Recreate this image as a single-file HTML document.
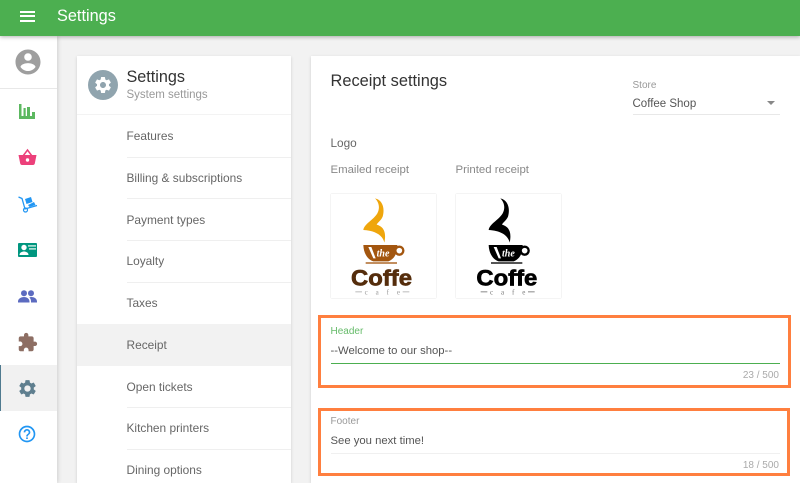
<!DOCTYPE html>
<html><head><meta charset="utf-8"><style>
html,body{margin:0;padding:0}
body{width:800px;height:483px;overflow:hidden;position:relative;background:#f2f2f2;font-family:"Liberation Sans",sans-serif;color:#444}
.a{position:absolute}
.t{position:absolute;white-space:nowrap;line-height:16px}
.i{position:absolute;font-size:11.900px;left:126.500px;color:#666}
.s{position:absolute;left:127px;right:0;height:1px;background:#efefef}
</style></head><body>
<div class="a" style="left:0;top:36px;width:57px;height:447px;background:#fff;box-shadow:1px 0 4px rgba(0,0,0,.15)"></div>
<div class="a" style="left:0;top:88px;width:57px;height:1px;background:#e8e8e8"></div>
<div class="a" style="left:0;top:365px;width:57px;height:46px;background:#f1f1f1"></div>
<div class="a" style="left:0;top:365px;width:1px;height:46px;background:#4f7a8f"></div>
<div class="a" style="left:0;top:0;width:800px;height:36px;background:#4caf50;box-shadow:0 1px 4px rgba(0,0,0,.3)"></div>
<div class="a" style="left:20px;top:11px;width:15px;height:2px;background:#fff"></div>
<div class="a" style="left:20px;top:15px;width:15px;height:2px;background:#fff"></div>
<div class="a" style="left:20px;top:20px;width:15px;height:2px;background:#fff"></div>
<div class="t" style="left:57px;top:7px;font-size:16.300px;color:#fff;line-height:18px">Settings</div>

<svg class="a" style="left:13px;top:47px" width="30" height="30" viewBox="0 0 24 24"><path fill="#9e9e9e" d="M12 2C6.48 2 2 6.48 2 12s4.48 10 10 10 10-4.48 10-10S17.52 2 12 2zm0 3c1.660 0 3 1.340 3 3s-1.340 3-3 3-3-1.340-3-3 1.340-3 3-3zm0 14.200c-2.500 0-4.710-1.280-6-3.220.03-1.990 4-3.080 6-3.080 1.990 0 5.970 1.090 6 3.080-1.290 1.940-3.500 3.220-6 3.220z"/></svg>
<svg class="a" style="left:0;top:100px" width="57" height="22" viewBox="0 0 57 22"><path fill="#5cb860" d="M19 4h2.500v12h2V8h2.200v8h1.300V7h3v9h2v-4h3v7H19z"/></svg>
<svg class="a" style="left:0;top:145px" width="57" height="24" viewBox="0 0 57 24"><path fill="none" stroke="#ec407a" stroke-width="1.500" d="M23 11l4.500-6 4.500 6"/><path fill="#ec407a" d="M18.500 10h18l-1.700 8.500a2 2 0 0 1-2 1.500H22.200a2 2 0 0 1-2-1.500z"/><circle cx="27.500" cy="15" r="1.700" fill="#fff"/></svg>
<svg class="a" style="left:0;top:190px" width="57" height="26" viewBox="0 0 57 26"><path fill="none" stroke="#2196f3" stroke-width="1.300" d="M18.500 7l3.500 1.500 3 10.500 12-3.500"/><path fill="#2196f3" d="M25 9l6-2 1.500 5-6 2zM28 15l6-3 1.500 3-6 2z"/><circle cx="25.500" cy="20" r="2" fill="none" stroke="#2196f3" stroke-width="1.200"/></svg>
<svg class="a" style="left:0;top:240px" width="57" height="20" viewBox="0 0 57 20"><rect x="18" y="3" width="19" height="14" rx="1" fill="#00967f"/><circle cx="24" cy="7.500" r="2.700" fill="#fff"/><path fill="#fff" d="M19.500 15c0-2.500 2.500-3.500 4.500-3.500s4.500 1 4.500 3.500z"/><path fill="#a8dcd0" d="M28 5h8v1.700h-8zM29 8h7v1.700h-7z"/></svg>
<svg class="a" style="left:0;top:285px" width="57" height="22" viewBox="0 0 57 22"><circle cx="24" cy="8.300" r="3" fill="#5c6bc0"/><circle cx="31" cy="8.300" r="3" fill="#5c6bc0"/><path fill="#5c6bc0" d="M18 17.500v-1c0-3 3.500-4.500 6-4.500s5.500 1.500 5.500 4.500v1zM31 17.500v-1c0-2-.6-3-1.700-4 .8-.4 1.500-.5 2.200-.5 2.500 0 5.500 1.500 5.500 4.500v1z"/></svg>
<svg class="a" style="left:17px;top:332px" width="21" height="21" viewBox="0 0 24 24"><path fill="#8d6e63" d="M20.500 11H19V7c0-1.100-.9-2-2-2h-4V3.500C13 2.120 11.880 1 10.500 1S8 2.120 8 3.500V5H4c-1.100 0-1.990.9-1.990 2v3.800H3.500c1.490 0 2.700 1.210 2.700 2.700s-1.210 2.700-2.700 2.700H2V20c0 1.100.9 2 2 2h3.800v-1.500c0-1.490 1.210-2.700 2.700-2.700 1.490 0 2.700 1.210 2.700 2.700V22H17c1.100 0 2-.9 2-2v-4h1.500c1.380 0 2.500-1.120 2.500-2.500S21.880 11 20.500 11z"/></svg>
<svg class="a" style="left:16.500px;top:377.500px" width="21" height="21" viewBox="0 0 24 24"><path fill="#5f7f8f" d="M19.140 12.940c.04-.3.060-.61.060-.94 0-.32-.020-.64-.070-.94l2.030-1.580c.18-.14.23-.41.120-.61l-1.920-3.320c-.12-.22-.37-.29-.59-.22l-2.390.96c-.5-.38-1.030-.7-1.620-.94l-.36-2.540c-.04-.24-.24-.41-.48-.41h-3.840c-.24 0-.43.170-.47.410l-.36 2.540c-.59.240-1.130.57-1.620.94l-2.390-.96c-.22-.08-.47 0-.59.220L2.740 8.870c-.12.210-.08.470.12.610l2.030 1.580c-.05.3-.09.630-.09.940s.02.640.07.940l-2.030 1.580c-.18.140-.23.410-.12.610l1.920 3.320c.12.220.37.290.59.220l2.390-.96c.5.380 1.030.7 1.620.94l.36 2.540c.05.240.24.410.48.410h3.840c.24 0 .44-.17.470-.41l.36-2.540c.59-.24 1.130-.56 1.620-.94l2.390.96c.22.080.47 0 .59-.22l1.920-3.320c.12-.22.07-.47-.12-.61l-2.010-1.580zM12 15.600c-1.980 0-3.600-1.620-3.600-3.600s1.620-3.600 3.600-3.600 3.600 1.620 3.600 3.600-1.620 3.600-3.600 3.600z"/></svg>
<svg class="a" style="left:17px;top:424px" width="20" height="20" viewBox="0 0 24 24"><path fill="#2196f3" d="M11 18h2v-2h-2v2zm1-16C6.480 2 2 6.480 2 12s4.480 10 10 10 10-4.480 10-10S17.520 2 12 2zm0 18c-4.410 0-8-3.590-8-8s3.590-8 8-8 8 3.590 8 8-3.590 8-8 8zm0-14c-2.210 0-4 1.790-4 4h2c0-1.100.9-2 2-2s2 .9 2 2c0 2-3 1.750-3 5h2c0-2.250 3-2.500 3-5 0-2.210-1.790-4-4-4z"/></svg>

<!-- menu card -->
<div class="a" style="left:77px;top:56px;width:214px;height:427px;background:#fff;box-shadow:0 1px 3px rgba(0,0,0,.15);overflow:hidden">
<div class="a" style="left:0;top:268px;width:214px;height:42px;background:#f2f2f2"></div>
<div class="a" style="left:0;top:58px;width:214px;height:1px;background:#f3f3f3"></div>
<div class="a" style="left:11px;top:14px;width:30px;height:30px;border-radius:50%;background:#90a4ae"></div>
<svg class="a" style="left:16px;top:19px" width="20" height="20" viewBox="0 0 24 24"><path fill="#fff" d="M19.140 12.940c.04-.3.060-.61.060-.94 0-.32-.020-.64-.070-.94l2.030-1.580c.18-.14.23-.41.120-.61l-1.920-3.320c-.12-.22-.37-.29-.59-.22l-2.390.96c-.5-.38-1.030-.7-1.620-.94l-.36-2.540c-.04-.24-.24-.41-.48-.41h-3.840c-.24 0-.43.170-.47.410l-.36 2.540c-.59.240-1.130.57-1.620.94l-2.390-.96c-.22-.08-.47 0-.59.220L2.740 8.870c-.12.210-.08.470.12.610l2.030 1.580c-.05.3-.09.630-.09.940s.02.640.07.940l-2.030 1.580c-.18.140-.23.410-.12.610l1.920 3.320c.12.220.37.290.59.220l2.390-.96c.5.380 1.030.7 1.620.94l.36 2.540c.05.240.24.410.48.410h3.840c.24 0 .44-.17.470-.41l.36-2.540c.59-.24 1.130-.56 1.620-.94l2.390.96c.22.080.47 0 .59-.22l1.920-3.320c.12-.22.07-.47-.12-.61l-2.010-1.580zM12 15.600c-1.980 0-3.600-1.620-3.600-3.600s1.620-3.600 3.600-3.600 3.600 1.620 3.600 3.600-1.620 3.600-3.600 3.600z"/></svg>
<div class="t" style="left:49.500px;top:12px;font-size:16.200px;color:#333;line-height:18px">Settings</div>
<div class="t" style="left:49.500px;top:31px;font-size:11.500px;color:#999">System settings</div>
<div class="s" style="left:50px;top:101px"></div>
<div class="s" style="left:50px;top:142px"></div>
<div class="s" style="left:50px;top:184px"></div>
<div class="s" style="left:50px;top:226px"></div>
<div class="s" style="left:50px;top:351px"></div>
<div class="s" style="left:50px;top:393px"></div>
</div>
<div class="t i" style="top:128px">Features</div>
<div class="t i" style="top:170px">Billing &amp; subscriptions</div>
<div class="t i" style="top:212px">Payment types</div>
<div class="t i" style="top:253px">Loyalty</div>
<div class="t i" style="top:295px">Taxes</div>
<div class="t i" style="top:337px">Receipt</div>
<div class="t i" style="top:379px">Open tickets</div>
<div class="t i" style="top:420px">Kitchen printers</div>
<div class="t i" style="top:462px">Dining options</div>

<!-- right card -->
<div class="a" style="left:311px;top:56px;width:489px;height:427px;background:#fff;box-shadow:0 1px 3px rgba(0,0,0,.15)"></div>
<div class="t" style="left:330.500px;top:72px;font-size:16.400px;color:#333;line-height:18px">Receipt settings</div>
<div class="t" style="left:632.500px;top:79px;font-size:10px;color:#999;line-height:14px">Store</div>
<div class="t" style="left:632.500px;top:96px;font-size:11.500px;color:#555">Coffee Shop</div>
<div class="a" style="left:767px;top:101px;width:0;height:0;border-left:4.500px solid transparent;border-right:4.500px solid transparent;border-top:4.500px solid #888"></div>
<div class="a" style="left:633px;top:114px;width:147px;height:1px;background:#e8e8e8"></div>
<div class="t" style="left:330.500px;top:135px;font-size:11.800px;color:#666">Logo</div>
<div class="t" style="left:330.500px;top:162px;font-size:11.400px;color:#888">Emailed receipt</div>
<div class="t" style="left:455.500px;top:162px;font-size:11.400px;color:#888">Printed receipt</div>

<div class="a" style="left:331px;top:194px;width:105px;height:104px;background:#fff;box-shadow:0 0 1px rgba(0,0,0,.22)"></div>
<div class="a" style="left:456px;top:194px;width:105px;height:104px;background:#fff;box-shadow:0 0 1px rgba(0,0,0,.22)"></div>
<svg class="a" style="left:320px;top:180px" width="260" height="130" viewBox="0 0 780 390">
<g>
<path fill="#efa60c" d="M165 55C188 60 195 85 188 110C183 122 172 128 170 134C190 140 200 155 193 188C188 165 165 152 130 150C132 132 160 120 172 100C180 85 178 68 165 55Z"/>
<path fill="#a3560f" d="M130 195H232C232 225 220 238 205 244H160C142 238 131 220 130 195Z"/>
<circle cx="238" cy="212" r="12" fill="#fff" stroke="#a3560f" stroke-width="7"/>
<path fill="#fff" d="M145 201l9 0 13 34-7 0z"/>
<text x="170" y="229" font-family="Liberation Serif,serif" font-style="italic" font-weight="bold" font-size="30" fill="#fff">the</text>
<rect x="137" y="247" width="94" height="4" fill="#a3560f"/>
<text x="93" y="316" font-family="Liberation Sans,sans-serif" font-weight="bold" font-size="66" fill="#552d0c" stroke="#552d0c" stroke-width="2" textLength="183" lengthAdjust="spacingAndGlyphs">Coffe</text>
<rect x="106" y="334" width="20" height="3" fill="#bbb"/><rect x="248" y="334" width="20" height="3" fill="#bbb"/>
<text x="134" y="343" font-family="Liberation Serif,serif" font-size="21" fill="#999" textLength="106">cafe</text>
</g>
<g transform="translate(376 0)">
<path fill="#000" d="M165 55C188 60 195 85 188 110C183 122 172 128 170 134C190 140 200 155 193 188C188 165 165 152 130 150C132 132 160 120 172 100C180 85 178 68 165 55Z"/>
<path fill="#000" d="M130 195H232C232 225 220 238 205 244H160C142 238 131 220 130 195Z"/>
<circle cx="238" cy="212" r="12" fill="#fff" stroke="#000" stroke-width="7"/>
<path fill="#fff" d="M145 201l9 0 13 34-7 0z"/>
<text x="170" y="229" font-family="Liberation Serif,serif" font-style="italic" font-weight="bold" font-size="30" fill="#fff">the</text>
<rect x="137" y="247" width="94" height="4" fill="#000"/>
<text x="93" y="316" font-family="Liberation Sans,sans-serif" font-weight="bold" font-size="66" fill="#000" stroke="#000" stroke-width="2" textLength="183" lengthAdjust="spacingAndGlyphs">Coffe</text>
<rect x="106" y="334" width="20" height="3" fill="#888"/><rect x="248" y="334" width="20" height="3" fill="#888"/>
<text x="134" y="343" font-family="Liberation Serif,serif" font-size="21" fill="#777" textLength="106">cafe</text>
</g>
</svg>

<!-- fields -->
<div class="t" style="left:330.500px;top:325px;font-size:10px;color:#66bb6a;line-height:14px">Header</div>
<div class="t" style="left:330.500px;top:343px;font-size:11.300px;color:#555">--Welcome to our shop--</div>
<div class="a" style="left:331px;top:363px;width:449px;height:1px;background:#4caf50"></div>
<div class="t" style="right:21px;top:368px;font-size:10px;color:#aaa">23 / 500</div>
<div class="t" style="left:330.500px;top:415px;font-size:10px;color:#999;line-height:14px">Footer</div>
<div class="t" style="left:330.500px;top:433px;font-size:11.300px;color:#555">See you next time!</div>
<div class="a" style="left:331px;top:453px;width:449px;height:1px;background:#f0f0f0"></div>
<div class="t" style="right:21px;top:458px;font-size:10px;color:#aaa">18 / 500</div>

<div class="a" style="left:318px;top:315px;width:467px;height:67px;border:3px solid #ff7f3f"></div>
<div class="a" style="left:318px;top:408px;width:466px;height:62px;border:3px solid #ff7f3f"></div>
</body></html>
